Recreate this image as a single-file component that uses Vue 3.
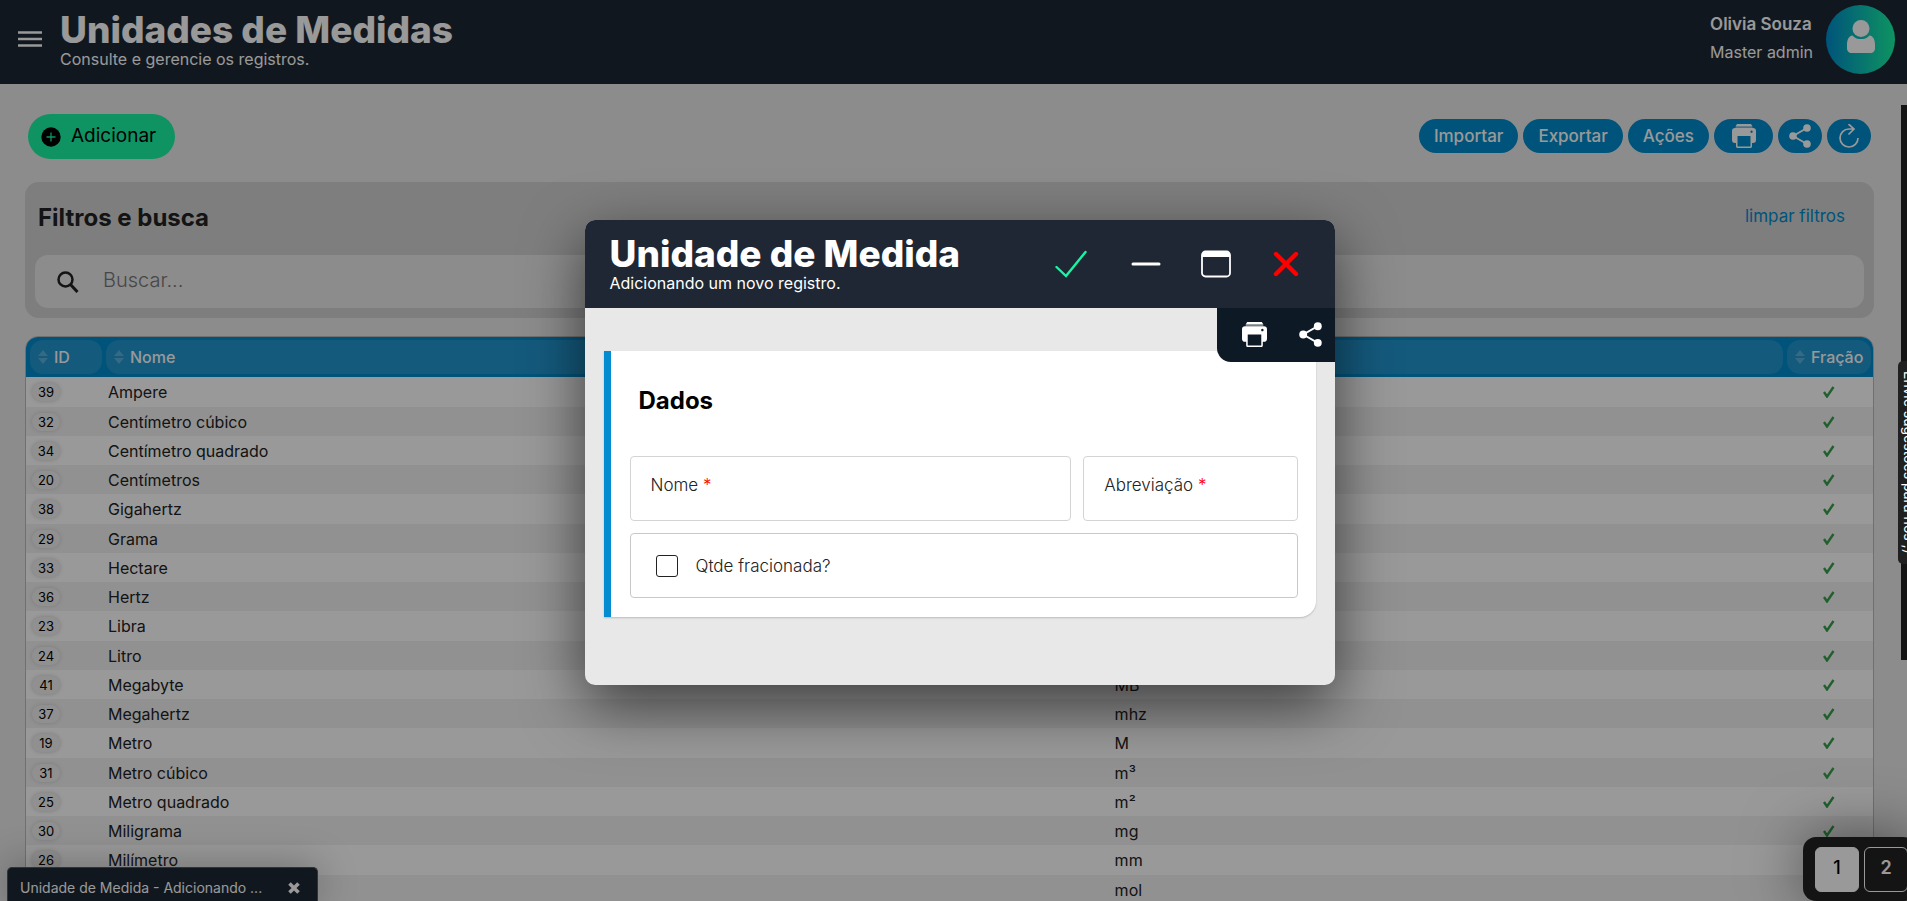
<script setup>
import { ref, computed } from 'vue'

const search = ref('')
const page = ref(1)
const showModal = ref(true)
const name = ref('')
const abbreviation = ref('')
const fractional = ref(false)

const units = ref([
  { id: 39, name: 'Ampere', abbr: 'A' },
  { id: 32, name: 'Centímetro cúbico', abbr: 'cm³' },
  { id: 34, name: 'Centímetro quadrado', abbr: 'cm²' },
  { id: 20, name: 'Centímetros', abbr: 'cm' },
  { id: 38, name: 'Gigahertz', abbr: 'ghz' },
  { id: 29, name: 'Grama', abbr: 'g' },
  { id: 33, name: 'Hectare', abbr: 'ha' },
  { id: 36, name: 'Hertz', abbr: 'hz' },
  { id: 23, name: 'Libra', abbr: 'lb' },
  { id: 24, name: 'Litro', abbr: 'L' },
  { id: 41, name: 'Megabyte', abbr: 'MB' },
  { id: 37, name: 'Megahertz', abbr: 'mhz' },
  { id: 19, name: 'Metro', abbr: 'M' },
  { id: 31, name: 'Metro cúbico', abbr: 'm³' },
  { id: 25, name: 'Metro quadrado', abbr: 'm²' },
  { id: 30, name: 'Miligrama', abbr: 'mg' },
  { id: 26, name: 'Milímetro', abbr: 'mm' },
  { id: 40, name: 'Mol', abbr: 'mol' },
])

const filteredUnits = computed(() =>
  units.value.filter((unit) => unit.name.toLowerCase().includes(search.value.toLowerCase())),
)

const closeModal = () => {
  showModal.value = false
}
</script>

<template>
  <div class="app">
    <header class="topbar">
      <button class="menu" aria-label="Menu">
        <svg width="24" height="16" viewBox="0 0 24 16">
          <path d="M0 1.500h24M0 8h24M0 14.500h24" stroke="#fff" stroke-width="2.400" />
        </svg>
      </button>
      <div class="titles">
        <h1>Unidades de Medidas</h1>
        <p>Consulte e gerencie os registros.</p>
      </div>
      <div class="user">
        <strong>Olivia Souza</strong>
        <span>Master admin</span>
      </div>
      <div class="avatar">
        <svg width="28" height="34" viewBox="0 0 28 34">
          <circle cx="14" cy="8.500" r="8.500" fill="#fff" />
          <path
            d="M5.500 15.500C8 18.600 11 19 14 19s6-.4 8.500-3.500C26.500 16 28 20 28 25v3c0 3.500-2 5-4.500 5h-19C2 33 0 31.500 0 28v-3c0-5 1.500-9 5.500-9.500z"
            fill="#fff"
          />
        </svg>
      </div>
    </header>

    <main>
      <div class="toolbar">
        <button class="add">
          <svg width="20" height="20" viewBox="0 0 20 20">
            <circle cx="10" cy="10" r="9.700" />
            <path d="M10 5.500v9M5.500 10h9" stroke="#19f5a3" stroke-width="1.300" />
          </svg>
          <span>Adicionar</span>
        </button>
        <div class="actions">
          <button>Importar</button>
          <button>Exportar</button>
          <button>Ações</button>
          <button class="print" aria-label="Imprimir">
            <svg width="24" height="24" viewBox="0 0 24 24">
              <path d="M5 0h14l1.500 2.500h-17z" fill="#fff" />
              <path d="M3.500 2.500h17v1.500h-17z" fill="#fff" opacity=".45" />
              <path
                fill="#fff"
                fill-rule="evenodd"
                d="M3 4h18c2 0 3 1 3 3v9c0 2-1 3-3 3h-1v3c0 1.500-.5 2-2 2H6c-1.500 0-2-.5-2-2v-3H3c-2 0-3-1-3-3V7c0-2 1-3 3-3zm2.500 8v10.500h13V12zM19.500 6.500a1.200 1.200 0 1 0 .1 0z"
              />
            </svg>
          </button>
          <button class="icon" aria-label="Compartilhar">
            <svg width="22" height="24" viewBox="0 0 22 24">
              <path d="M18 4L4 12l14 8" fill="none" stroke="#fff" stroke-width="1.800" />
              <circle cx="18" cy="4" r="3.800" fill="#fff" />
              <circle cx="4" cy="12" r="3.800" fill="#fff" />
              <circle cx="18" cy="20" r="3.800" fill="#fff" />
            </svg>
          </button>
          <button class="icon" aria-label="Atualizar">
            <svg width="22" height="24" viewBox="0 0 22 24">
              <path
                d="M16 5H11a9 9 0 1 0 9 9M10.500 0l5.500 5-5.500 5.500"
                fill="none"
                stroke="#fff"
                stroke-width="1.700"
              />
            </svg>
          </button>
        </div>
      </div>

      <section class="filters">
        <div class="filters-head">
          <h2>Filtros e busca</h2>
          <a href="#" @click.prevent="search = ''">limpar filtros</a>
        </div>
        <label class="search">
          <svg width="22" height="22" viewBox="0 0 22 22">
            <circle cx="8.500" cy="8.500" r="7" fill="none" stroke="#222" stroke-width="2.500" />
            <path d="M13.500 13.500l7 7.500" stroke="#222" stroke-width="3" />
          </svg>
          <input v-model="search" type="text" placeholder="Buscar..." aria-label="Buscar" />
        </label>
      </section>

      <div class="table-box">
        <table>
          <colgroup>
            <col class="col-id" />
            <col class="col-name" />
            <col />
            <col class="col-fraction" />
          </colgroup>
          <thead>
            <tr>
              <th v-for="title in ['ID', 'Nome', 'Abreviação', 'Fração']" :key="title">
                <div class="pill">
                  <svg width="10" height="14" viewBox="0 0 10 14">
                    <path d="M0 6l5-6 5 6zM0 8l5 6 5-6z" fill="#fff" opacity=".25" />
                  </svg>
                  {{ title }}
                </div>
              </th>
            </tr>
          </thead>
          <tbody>
            <tr v-for="unit in filteredUnits" :key="unit.id">
              <td><span class="badge">{{ unit.id }}</span></td>
              <td>{{ unit.name }}</td>
              <td>{{ unit.abbr }}</td>
              <td class="fraction">
                <svg width="12" height="12" viewBox="0 0 12 12">
                  <path d="M1 6l3 4.500L10.500 1" fill="none" stroke="#38a04c" stroke-width="2.400" />
                </svg>
              </td>
            </tr>
          </tbody>
        </table>
      </div>
    </main>

    <div class="side-panel"></div>

    <div class="window-tab">
      <span>Unidade de Medida - Adicionando ...</span>
      <button aria-label="Fechar">
        <svg width="12" height="12" viewBox="0 0 12 12">
          <path d="M1.500 1.500l9 9M10.500 1.500l-9 9" stroke="#fff" stroke-width="3.600" />
        </svg>
      </button>
    </div>

    <nav class="pager">
      <button v-for="n in 2" :key="n" :class="{ active: page === n }" @click="page = n">
        {{ n }}
      </button>
    </nav>

    <div v-if="showModal" class="overlay"></div>

    <button class="feedback">Envie sugestões para nós ;)</button>

    <div v-if="showModal" class="modal">
      <header class="modal-head">
        <div class="titles">
          <h1>Unidade de Medida</h1>
          <p>Adicionando um novo registro.</p>
        </div>
        <div class="controls">
          <button class="save" aria-label="Salvar" @click="closeModal">
            <svg width="32" height="28" viewBox="0 0 32 28">
              <path
                d="M1.500 17l9.500 9L30.500 2"
                fill="none"
                stroke="#19f5a3"
                stroke-width="2.400"
                stroke-linecap="round"
              />
            </svg>
          </button>
          <button aria-label="Minimizar">
            <svg width="32" height="28" viewBox="0 0 32 28">
              <path d="M3 14h26" stroke="#fff" stroke-width="3" stroke-linecap="round" />
            </svg>
          </button>
          <button aria-label="Maximizar">
            <svg width="32" height="28" viewBox="0 0 32 28">
              <rect x="2" y="1.500" width="28" height="25" rx="3.500" fill="none" stroke="#fff" stroke-width="1.800" />
              <path d="M2 7V5a3 3 0 0 1 3-3h22a3 3 0 0 1 3 3v2z" fill="#fff" />
            </svg>
          </button>
          <button aria-label="Fechar" @click="closeModal">
            <svg width="32" height="28" viewBox="0 0 32 28">
              <path
                d="M6 4l20 20M26 4L6 24"
                stroke="#f00"
                stroke-width="4.400"
                stroke-linecap="round"
              />
            </svg>
          </button>
        </div>
      </header>

      <div class="modal-tools">
        <button aria-label="Imprimir">
          <svg width="25" height="25" viewBox="0 0 24 24">
            <path d="M5 0h14l1.500 2.500h-17z" fill="#fff" />
            <path d="M3.500 2.500h17v1.500h-17z" fill="#fff" opacity=".45" />
            <path
              fill="#fff"
              fill-rule="evenodd"
              d="M3 4h18c2 0 3 1 3 3v9c0 2-1 3-3 3h-1v3c0 1.500-.5 2-2 2H6c-1.500 0-2-.5-2-2v-3H3c-2 0-3-1-3-3V7c0-2 1-3 3-3zm2.500 8v10.500h13V12zM19.500 6.500a1.200 1.200 0 1 0 .1 0z"
            />
          </svg>
        </button>
        <button aria-label="Compartilhar">
          <svg width="23" height="25" viewBox="0 0 22 24">
            <path d="M18 4L4 12l14 8" fill="none" stroke="#fff" stroke-width="1.800" />
            <circle cx="18" cy="4" r="3.800" fill="#fff" />
            <circle cx="4" cy="12" r="3.800" fill="#fff" />
            <circle cx="18" cy="20" r="3.800" fill="#fff" />
          </svg>
        </button>
      </div>

      <form class="card" @submit.prevent="closeModal">
        <h2>Dados</h2>
        <div class="fields">
          <div class="field">
            <label for="name">Nome <em>*</em></label>
            <input id="name" v-model="name" type="text" />
          </div>
          <div class="field">
            <label for="abbreviation">Abreviação <em>*</em></label>
            <input id="abbreviation" v-model="abbreviation" type="text" />
          </div>
          <label class="check">
            <input v-model="fractional" type="checkbox" />
            Qtde fracionada?
          </label>
        </div>
      </form>
    </div>
  </div>
</template>

<style>
body {
  overflow: hidden;
}
</style>

<style scoped>
* {
  box-sizing: border-box;
}

.app {
  position: relative;
  height: 100vh;
  overflow: hidden;
  background: #e9e9e9;
  color: #222;
  font-family: Inter, 'Liberation Sans', sans-serif;
  font-size: 16px;
}

button {
  padding: 0;
  border: none;
  background: none;
  color: inherit;
  font: inherit;
  cursor: pointer;
}

svg {
  display: block;
  flex-shrink: 0;
}

h1,
h2,
p {
  margin: 0;
}

h1 {
  font-size: 37px;
  font-weight: 800;
  line-height: 40px;
}

h2 {
  font-size: 24px;
  font-weight: 700;
  line-height: 32px;
}

.topbar {
  display: flex;
  align-items: center;
  height: 84px;
  padding: 0 12px 6px 18px;
  background: #1d2733;
  color: #fff;
}

.titles {
  flex: 1;
  white-space: nowrap;
}

.titles p {
  line-height: 18px;
}

.topbar .titles {
  padding-left: 18px;
}

.user {
  display: flex;
  flex-direction: column;
  gap: 8px;
  padding: 0 13px 2px 0;
  line-height: 20px;
}

.user strong {
  font-size: 17px;
  font-weight: 600;
}

.avatar {
  display: flex;
  justify-content: center;
  width: 69px;
  height: 69px;
  padding-top: 15px;
  border-radius: 50%;
  background: linear-gradient(90deg, #008ccd, #19f5a3);
}

main {
  padding: 30px 33px 0 25px;
}

.toolbar {
  display: flex;
  justify-content: space-between;
  padding: 0 3px;
}

.add {
  display: flex;
  align-items: center;
  gap: 10px;
  height: 45px;
  padding: 0 19px 0 13px;
  border-radius: 23px;
  background: #19f5a3;
  color: #000;
  font-size: 19px;
}

.add span {
  padding-bottom: 3px;
}

.actions {
  display: flex;
  gap: 5px;
  padding-top: 5px;
}

.actions button {
  display: flex;
  align-items: center;
  justify-content: center;
  height: 34px;
  padding: 0 15px;
  border-radius: 17px;
  background: #008ccd;
  color: #fff;
  font-size: 17px;
  font-weight: 500;
}

.actions .print {
  width: 59px;
}

.actions .icon {
  width: 44px;
  padding: 0;
}

.filters {
  margin-top: 23px;
  padding: 20px 10px 10px;
  border-radius: 14px;
  background: #d2d2d2;
}

.filters-head {
  display: flex;
  justify-content: space-between;
  padding: 0 19px 0 3px;
}

.filters-head a {
  color: #008ccd;
  font-size: 17px;
  line-height: 28px;
  text-decoration: none;
}

.search {
  display: flex;
  align-items: center;
  gap: 24px;
  height: 53px;
  margin-top: 21px;
  padding: 0 22px;
  border-radius: 13px;
  background: #e9e9e9;
}

.search input {
  flex: 1;
  padding: 0 0 3px;
  border: none;
  outline: none;
  background: none;
  font: inherit;
  font-size: 20px;
  font-weight: 300;
}

.search input::placeholder {
  color: #777;
}

.table-box {
  margin-top: 18px;
  border: 1px solid #bbb;
  border-radius: 13px 13px 0 0;
  background: #fff;
  overflow: hidden;
}

table {
  width: 100%;
  border-collapse: collapse;
  table-layout: fixed;
}

.col-id {
  width: 78px;
}

.col-name {
  width: 54.5%;
}

.col-fraction {
  width: 88px;
}

th {
  height: 40px;
  padding: 2px;
  background: #008ccd;
  color: #fff;
  font-weight: 500;
}

.pill {
  display: flex;
  align-items: center;
  gap: 6px;
  height: 34px;
  padding-left: 8px;
  border-radius: 13px;
  background: #2296d0;
}

th:first-child .pill {
  margin-left: 2px;
}

td {
  height: 29px;
  padding: 0 4px;
}

td:first-child {
  padding-left: 6px;
}

tbody tr:nth-child(4n + 1) td {
  height: 30px;
}

tbody tr:nth-child(even) {
  background: #f2f2f2;
}

.badge {
  display: block;
  width: 28px;
  border-radius: 9px;
  background: #f0f0f0;
  box-shadow: 0 0 4px #ccc;
  color: #000;
  font-size: 13px;
  line-height: 18px;
  text-align: center;
}

.fraction svg {
  margin: 0 auto;
}

.side-panel {
  position: absolute;
  top: 105px;
  right: 0;
  width: 6px;
  height: 555px;
  background: #222;
}

.window-tab {
  position: absolute;
  bottom: 0;
  left: 7px;
  display: flex;
  align-items: center;
  justify-content: space-between;
  width: 311px;
  height: 34px;
  padding: 6px 17px 0 12px;
  border: 1px solid #555;
  border-bottom: none;
  border-radius: 5px 5px 0 0;
  background: #1d2733;
  box-shadow: 0 0 40px rgba(0, 0, 0, 0.3);
  color: #fff;
  font-size: 14px;
}

.pager {
  position: absolute;
  right: -9px;
  bottom: 0;
  display: flex;
  gap: 5px;
  padding: 10px 8px 9px 12px;
  border-radius: 13px;
  background: #222;
  box-shadow: 0 0 60px rgba(0, 0, 0, 0.5);
}

.pager button {
  width: 44px;
  height: 45px;
  padding-bottom: 4px;
  border: 1px solid #fff;
  border-radius: 6px;
  color: #fff;
  font-size: 18px;
  font-weight: 600;
}

.pager .active {
  background: #fff;
  color: #000;
  font-weight: 500;
}

.overlay {
  position: absolute;
  inset: 0;
  background: rgba(0, 0, 0, 0.4);
}

.feedback {
  position: absolute;
  top: 361px;
  right: -13px;
  padding: 10px 2px;
  border-radius: 5px 0 0 5px;
  background: #202020;
  color: #fff;
  font-size: 14px;
  line-height: 18px;
  writing-mode: vertical-rl;
  white-space: nowrap;
}

.modal {
  position: absolute;
  top: 220px;
  left: calc(50% - 369px);
  width: 750px;
  padding-bottom: 68px;
  border-radius: 10px;
  background: #e8e8e8;
  box-shadow: 0 20px 60px rgba(0, 0, 0, 0.6);
  overflow: hidden;
}

.modal-head {
  display: flex;
  align-items: center;
  height: 88px;
  padding: 0 33px 3px 25px;
  background: #1e2733;
  color: #fff;
}

.controls {
  display: flex;
  gap: 38px;
  padding-top: 3px;
}

.controls .save {
  margin-right: 5px;
}

.modal-tools {
  position: absolute;
  top: 88px;
  right: 0;
  display: flex;
  justify-content: space-between;
  width: 118px;
  padding: 14px 13px 15px 25px;
  border-radius: 0 0 0 14px;
  background: #0d1924;
}

.card {
  margin: 43px 19px 0;
  padding: 34px 18px 19px 19px;
  border-left: 7px solid #048bd0;
  border-radius: 0 0 16px 0;
  background: #fff;
  box-shadow: 0 1px 2px #bbb;
}

.card h2 {
  padding-left: 9px;
  color: #000;
}

.fields {
  display: grid;
  grid-template-columns: minmax(0, 33fr) minmax(0, 16fr);
  gap: 12px;
  margin-top: 39px;
  font-size: 17px;
  font-weight: 300;
}

.field {
  display: flex;
  align-items: center;
  height: 65px;
  padding: 0 20px;
  border: 1px solid #d4d4d4;
  border-radius: 4px;
}

.field label {
  padding-bottom: 8px;
  white-space: nowrap;
}

.field em {
  color: #f00;
  font-style: normal;
}

.field input {
  flex: 1;
  min-width: 0;
  border: none;
  outline: none;
  background: none;
  font: inherit;
}

.check {
  display: flex;
  grid-column: 1 / -1;
  align-items: center;
  gap: 18px;
  height: 65px;
  padding: 0 25px;
  border: 1px solid #c8c8c8;
  border-radius: 4px;
}

.check input {
  width: 22px;
  height: 22px;
  margin: 0;
  border: 1px solid #222;
  border-radius: 3px;
  appearance: none;
}

.check input:checked {
  background: #048bd0;
}
</style>
